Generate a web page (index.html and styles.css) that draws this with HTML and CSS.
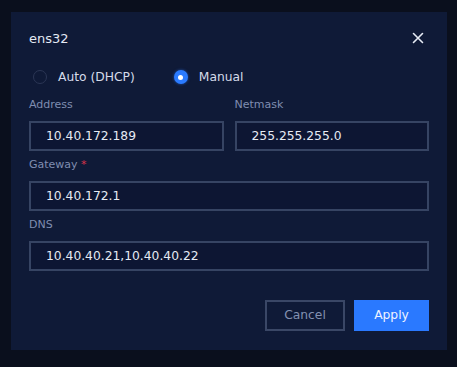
FILE: index.html
```html
<!DOCTYPE html>
<html lang="en">

<head>
    <meta charset="UTF-8">
    <meta name="viewport" content="width=device-width, initial-scale=1.0">
    <link rel="stylesheet" href="styles.css">
    <title>ens32</title>
</head>

<body>
    <div class="dialog">
        <div class="dialogHead">
            <span class="title">ens32</span>
            <span class="close">
                <svg width="12" height="12" viewBox="0 0 12 12">
                    <path d="M1.5 1.5 L10.5 10.5 M10.5 1.5 L1.5 10.5" stroke="#e6ebf5" stroke-width="1.6" stroke-linecap="round"/>
                </svg>
            </span>
        </div>
        <div class="radios">
            <label class="radio"><span class="dot"></span>Auto (DHCP)</label>
            <label class="radio checked"><span class="dot"></span>Manual</label>
        </div>
        <div class="row">
            <div class="field">
                <div class="label">Address</div>
                <div class="input">10.40.172.189</div>
            </div>
            <div class="field">
                <div class="label">Netmask</div>
                <div class="input">255.255.255.0</div>
            </div>
        </div>
        <div class="field">
            <div class="label">Gateway <span class="req">*</span></div>
            <div class="input">10.40.172.1</div>
        </div>
        <div class="field">
            <div class="label">DNS</div>
            <div class="input">10.40.40.21,10.40.40.22</div>
        </div>
        <div class="footer">
            <div class="btn cancel">Cancel</div>
            <div class="btn apply">Apply</div>
        </div>
    </div>
</body>

</html>
```

FILE: styles.css
```css
* {
    padding: 0;
    margin: 0;
    box-sizing: border-box;
}

body {
    background: #0a0f1d;
    font-family: "DejaVu Sans", sans-serif;
    height: 367px;
    overflow: hidden;
}

.dialog {
    margin: 12px 0 0 11px;
    width: 436px;
    height: 338px;
    padding: 16px 18px 19px;
    background: #0f1a37;
}

.dialogHead {
    display: flex;
    justify-content: space-between;
    align-items: center;
    height: 20px;
}

.dialogHead .title {
    font-size: 13px;
    color: #e4e9f3;
}

.dialogHead .close {
    display: flex;
    margin-right: 5px;
}

.radios {
    display: flex;
    align-items: center;
    height: 20px;
    margin-top: 19px;
    padding-left: 4px;
}

.radio {
    display: flex;
    align-items: center;
    font-size: 12.3px;
    color: #d5dcea;
    margin-right: 39px;
}

.radio .dot {
    width: 14px;
    height: 14px;
    border-radius: 50%;
    border: 1px solid #2b3655;
    margin-right: 11px;
}

.radio.checked .dot {
    border: none;
    background: #2b7bff;
    box-shadow: 0 0 3px rgba(43, 123, 255, 0.6);
    display: flex;
    align-items: center;
    justify-content: center;
}

.radio.checked .dot::after {
    content: "";
    width: 5px;
    height: 5px;
    border-radius: 50%;
    background: #fff;
}

.row {
    display: flex;
    gap: 11px;
    margin-top: 10px;
}

.row .field {
    flex: 1;
}

.field + .field {
    margin-top: 6px;
}

.row .field + .field {
    margin-top: 0;
}

.row + .field {
    margin-top: 6px;
}

.label {
    font-size: 11px;
    line-height: 16px;
    color: #7f8db0;
    margin-bottom: 8px;
}

.label .req {
    color: #d8334a;
}

.input {
    height: 30px;
    border: 2px solid #364463;
    padding-left: 15px;
    font-size: 12.3px;
    line-height: 26px;
    color: #e6ebf4;
    background: #0d1633;
}

.footer {
    display: flex;
    justify-content: flex-end;
    gap: 9px;
    margin-top: 29px;
}

.btn {
    height: 31px;
    font-size: 12.3px;
    line-height: 31px;
    text-align: center;
    cursor: pointer;
}

.cancel {
    width: 80px;
    border: 2px solid #3a4766;
    line-height: 27px;
    color: #8391b1;
}

.apply {
    width: 75px;
    background: #2a79ff;
    color: #eef3ff;
}
```
